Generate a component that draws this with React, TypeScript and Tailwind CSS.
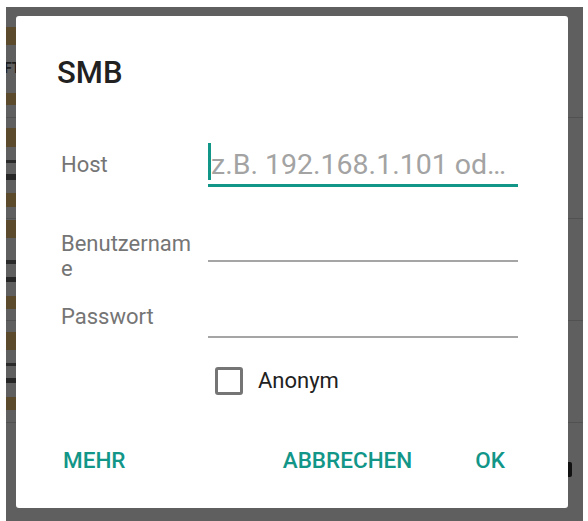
import React from 'react';

// Dimmed page behind the dialog: only the narrow strips left and right of it show.
type Row = { cls: string; bars: string[]; tail?: boolean };

const rows: Row[] = [
  {
    cls: 'h-[111px]',
    bars: ['mt-[20px] h-[18px] bg-[#5c4a2c]', 'label', 'mt-[18px] h-[12px] bg-[#5c4a2c]'],
  },
  {
    cls: 'h-[101px]',
    bars: [
      'mt-[10px] h-[19px] bg-[#5c4a2c]',
      'mt-[13px] h-[3px] bg-[#2a2a2a]',
      'mt-[11px] h-[6px] bg-[#262626]',
      'mt-[13px] h-[14px] bg-[#5c4a2c]',
    ],
  },
  {
    cls: 'h-[102px]',
    bars: [
      'mt-[1px] h-[18px] bg-[#5c4a2c]',
      'mt-[22px] h-[4px] bg-[#2a2a2a]',
      'mt-[13px] h-[5px] bg-[#262626]',
      'mt-[14px] h-[13px] bg-[#5c4a2c]',
    ],
  },
  {
    cls: 'h-[102px]',
    bars: [
      'mt-[11px] h-[18px] bg-[#5c4a2c]',
      'mt-[13px] h-[3px] bg-[#2a2a2a]',
      'mt-[12px] h-[5px] bg-[#262626]',
      'mt-[14px] h-[13px] bg-[#5c4a2c]',
    ],
  },
  { cls: 'flex-1', bars: [], tail: true },
];

const BackgroundList: React.FC = () => (
  <div className="flex flex-col h-full">
    {rows.map((row, i) => (
      <div
        key={i}
        className={`${row.cls} flex border-b border-[#515151] last:border-b-0`}
      >
        <div className="w-[10px] flex flex-col overflow-hidden">
          {row.bars.map((bar, j) =>
            bar === 'label' ? (
              <span
                key={j}
                className="mt-[16px] h-[14px] text-[14px] leading-[14px] font-bold text-[#1c1c1c] -ml-[2px] font-['Roboto',sans-serif]"
              >
                FT
              </span>
            ) : (
              <div key={j} className={`w-full ${bar}`} />
            )
          )}
        </div>
        <div className="flex-1 flex justify-end pr-[11px]">
          {row.tail && (
            <div className="mt-[39px] w-[5px] h-[15px] bg-[#111] rounded-r-[2px]" />
          )}
        </div>
      </div>
    ))}
  </div>
);

const SmbDialog: React.FC = () => (
  <div className="absolute left-[10px] top-[9px] w-[552px] h-[492px] bg-white rounded-[3px] flex flex-col font-['Roboto',sans-serif]">
    <h2 className="ml-[41px] mt-[39px] text-[31px] leading-[36px] font-medium text-[#212121]">
      SMB
    </h2>

    {/* Host */}
    <div className="ml-[45px] mt-[55px] flex items-start">
      <label className="w-[147px] mt-[6px] text-[22px] leading-[26px] text-[#757575]">
        Host
      </label>
      <div className="relative w-[310px]">
        <input
          type="text"
          readOnly
          placeholder="z.B. 192.168.1.101 od…"
          className="block w-full h-[41px] pl-[3px] bg-transparent border-b-[3px] border-[#129688] text-[28.5px] text-[#212121] outline-none placeholder:text-[#a3a3a3]"
        />
        <span className="absolute left-0 top-[-3px] w-[3px] h-[37px] bg-[#129688]" />
      </div>
    </div>

    {/* Benutzername */}
    <div className="ml-[45px] mt-[35px] flex items-start">
      <label className="w-[138px] mr-[9px] mt-[9px] text-[22px] leading-[25px] text-[#757575] break-all">
        Benutzername
      </label>
      <input
        type="text"
        readOnly
        className="block w-[310px] h-[40px] pl-[3px] bg-transparent border-b-2 border-[#a5a5a5] text-[28px] outline-none"
      />
    </div>

    {/* Passwort */}
    <div className="ml-[45px] mt-[17px] flex items-start">
      <label className="w-[147px] mt-[6px] text-[22px] leading-[25px] text-[#757575]">
        Passwort
      </label>
      <input
        type="password"
        readOnly
        className="block w-[310px] h-[40px] pl-[3px] bg-transparent border-b-2 border-[#a5a5a5] text-[28px] outline-none"
      />
    </div>

    {/* Anonym */}
    <div className="ml-[199px] mt-[29px] flex items-center">
      <span className="w-[28px] h-[28px] border-[3px] border-[#757575] rounded-[3px]" />
      <span className="ml-[15px] text-[22px] leading-[26px] text-[#212121]">Anonym</span>
    </div>

    {/* Actions */}
    <div className="mt-[52px] ml-[47px] pr-[63px] flex items-center text-[22.5px] leading-[26px] font-medium text-[#129688]">
      <button type="button">MEHR</button>
      <button type="button" className="ml-auto">
        ABBRECHEN
      </button>
      <button type="button" className="ml-[63px]">
        OK
      </button>
    </div>
  </div>
);

export default function App() {
  return (
    <div className="w-[588px] h-[521px] bg-white pl-[6px] pt-[7px] pr-[5px] overflow-hidden">
      <div className="relative h-[514px] bg-[#5f5f5f] overflow-hidden">
        <BackgroundList />
        <SmbDialog />
      </div>
    </div>
  );
}
